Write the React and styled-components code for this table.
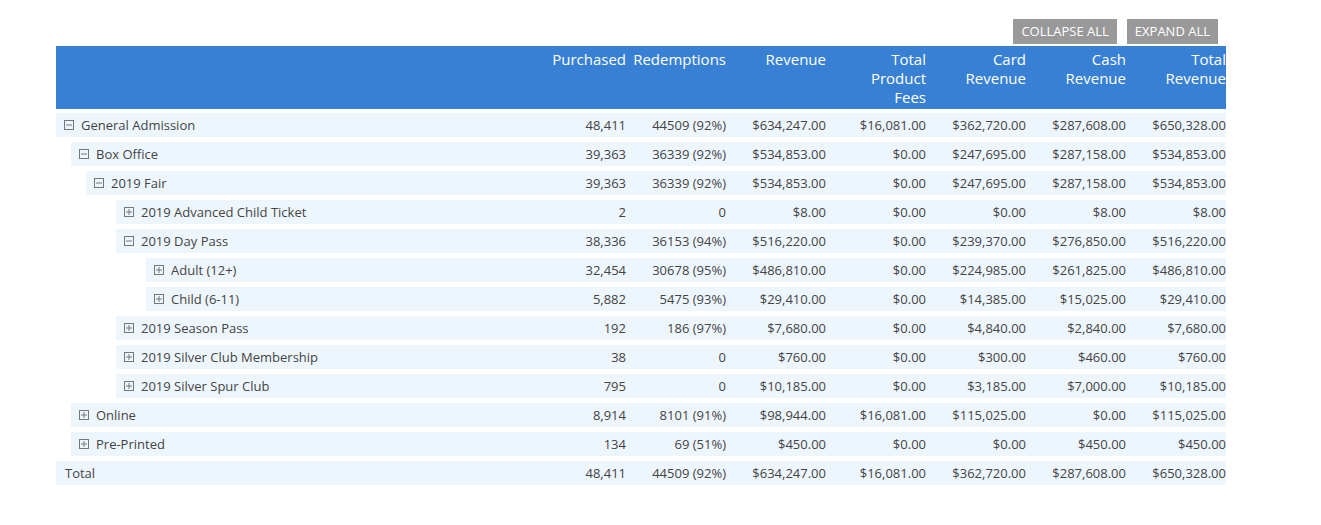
import React from "react";
import styled, { createGlobalStyle } from "styled-components";

const Global = createGlobalStyle`
  html, body { margin: 0; padding: 0; background: #fff; }
  body { font-family: "Open Sans", "Noto Sans", sans-serif; color: #444; }
`;

const Page = styled.div`
  width: 1321px;
  height: 525px;
  padding: 19px 0 0 56px;
  box-sizing: border-box;
`;

const Wrap = styled.div`
  width: 1170px;
`;

const Toolbar = styled.div`
  display: flex;
  justify-content: flex-end;
  gap: 10px;
  padding-right: 8px;
  margin-bottom: 2px;
`;

const Button = styled.button`
  height: 25px;
  padding: 0 8px;
  border: 0;
  background: #999;
  color: #fff;
  font-family: "Open Sans", sans-serif;
  font-size: 13px;
  line-height: 25px;
  cursor: pointer;
`;

const Header = styled.div`
  display: grid;
  grid-template-columns: 470px repeat(7, 100px);
  background: #3880d4;
  color: #fff;
  font-size: 15px;
  line-height: 19px;
  height: 63px;
  box-sizing: border-box;
  padding-top: 4px;
  margin-bottom: 4px;
`;

const HeadCell = styled.div`
  text-align: right;
`;

const Body = styled.div`
  display: flex;
  flex-direction: column;
  gap: 5px;
`;

const Row = styled.div`
  display: grid;
  grid-template-columns: ${(p) => 470 - p.$indent}px repeat(7, 100px);
  margin-left: ${(p) => p.$indent}px;
  height: 24px;
  align-items: center;
  background: #eef6fd;
  font-size: 13px;
`;

const Label = styled.div`
  display: flex;
  align-items: center;
  padding-left: ${(p) => (p.$plain ? 9 : 8)}px;
  gap: 7px;
  white-space: nowrap;
`;

const Num = styled.div`
  text-align: right;
  white-space: nowrap;
`;

const Toggle = ({ open }) => (
  <svg width="10" height="10" viewBox="0 0 10 10">
    <rect x="0.5" y="0.5" width="9" height="9" fill="none" stroke="#777" />
    <line x1="2" y1="5" x2="8" y2="5" stroke="#777" />
    {!open && <line x1="5" y1="2" x2="5" y2="8" stroke="#777" />}
  </svg>
);

const rows = [
  [0, true, "General Admission", "48,411", "44509 (92%)", "$634,247.00", "$16,081.00", "$362,720.00", "$287,608.00", "$650,328.00"],
  [15, true, "Box Office", "39,363", "36339 (92%)", "$534,853.00", "$0.00", "$247,695.00", "$287,158.00", "$534,853.00"],
  [30, true, "2019 Fair", "39,363", "36339 (92%)", "$534,853.00", "$0.00", "$247,695.00", "$287,158.00", "$534,853.00"],
  [60, false, "2019 Advanced Child Ticket", "2", "0", "$8.00", "$0.00", "$0.00", "$8.00", "$8.00"],
  [60, true, "2019 Day Pass", "38,336", "36153 (94%)", "$516,220.00", "$0.00", "$239,370.00", "$276,850.00", "$516,220.00"],
  [90, false, "Adult (12+)", "32,454", "30678 (95%)", "$486,810.00", "$0.00", "$224,985.00", "$261,825.00", "$486,810.00"],
  [90, false, "Child (6-11)", "5,882", "5475 (93%)", "$29,410.00", "$0.00", "$14,385.00", "$15,025.00", "$29,410.00"],
  [60, false, "2019 Season Pass", "192", "186 (97%)", "$7,680.00", "$0.00", "$4,840.00", "$2,840.00", "$7,680.00"],
  [60, false, "2019 Silver Club Membership", "38", "0", "$760.00", "$0.00", "$300.00", "$460.00", "$760.00"],
  [60, false, "2019 Silver Spur Club", "795", "0", "$10,185.00", "$0.00", "$3,185.00", "$7,000.00", "$10,185.00"],
  [15, false, "Online", "8,914", "8101 (91%)", "$98,944.00", "$16,081.00", "$115,025.00", "$0.00", "$115,025.00"],
  [15, false, "Pre-Printed", "134", "69 (51%)", "$450.00", "$0.00", "$0.00", "$450.00", "$450.00"],
];

const total = ["Total", "48,411", "44509 (92%)", "$634,247.00", "$16,081.00", "$362,720.00", "$287,608.00", "$650,328.00"];

const headers = [
  ["Purchased"],
  ["Redemptions"],
  ["Revenue"],
  ["Total", "Product", "Fees"],
  ["Card", "Revenue"],
  ["Cash", "Revenue"],
  ["Total", "Revenue"],
];

export default function App() {
  return (
    <>
      <Global />
      <Page>
        <Wrap>
          <Toolbar>
            <Button>COLLAPSE ALL</Button>
            <Button>EXPAND ALL</Button>
          </Toolbar>
          <Header>
            <div />
            {headers.map((h, i) => (
              <HeadCell key={i}>
                {h.map((l, j) => (
                  <div key={j}>{l}</div>
                ))}
              </HeadCell>
            ))}
          </Header>
          <Body>
            {rows.map(([indent, open, label, ...nums], i) => (
              <Row key={i} $indent={indent}>
                <Label>
                  <Toggle open={open} />
                  <span>{label}</span>
                </Label>
                {nums.map((n, j) => (
                  <Num key={j}>{n}</Num>
                ))}
              </Row>
            ))}
            <Row $indent={0}>
              <Label $plain>{total[0]}</Label>
              {total.slice(1).map((n, j) => (
                <Num key={j}>{n}</Num>
              ))}
            </Row>
          </Body>
        </Wrap>
      </Page>
    </>
  );
}
